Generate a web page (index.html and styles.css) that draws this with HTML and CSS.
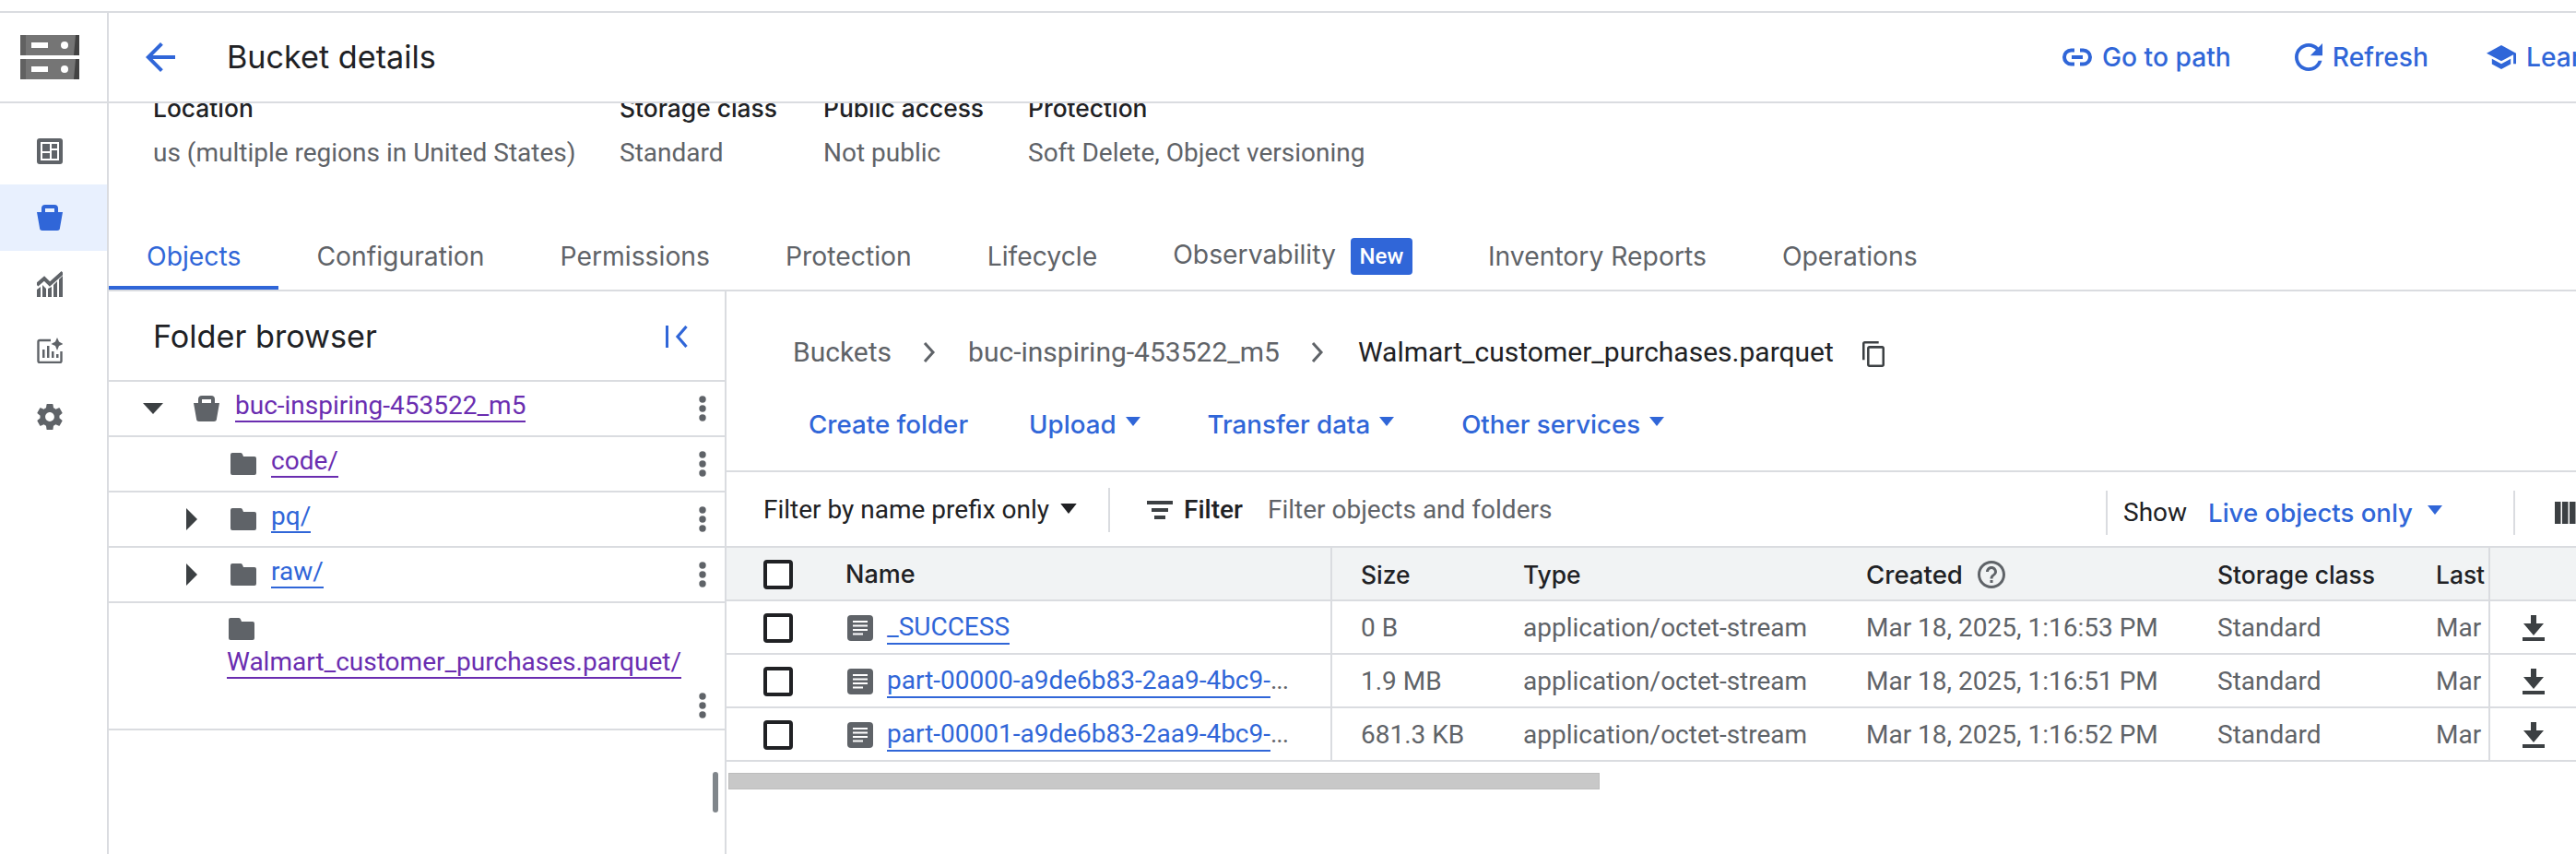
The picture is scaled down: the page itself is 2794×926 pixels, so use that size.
FILE: index.html
```html
<!doctype html>
<html lang="en">
<head>
<meta charset="utf-8">
<title>Bucket details</title>
<link rel="stylesheet" href="styles.css">
</head>
<body>
<svg class="defs" width="0" height="0" aria-hidden="true">
  <symbol id="dots" viewBox="0 0 28 32"><circle cx="14" cy="6" r="3.7"/><circle cx="14" cy="16" r="3.7"/><circle cx="14" cy="26" r="3.7"/></symbol>
  <symbol id="folder" viewBox="0 0 32 32"><path d="M4 4h9a2 2 0 0 1 2 1.5L16 8h12a2 2 0 0 1 2 2v16a2 2 0 0 1-2 2H4a2 2 0 0 1-2-2V6a2 2 0 0 1 2-2z"/></symbol>
  <symbol id="file" viewBox="0 0 32 32"><rect x="2" y="2" width="28" height="28" rx="4"/><path fill="#fff" d="M8 8h16v2H8zM8 12.500h16v2H8zM8 17h16v2H8zM8 21.500h11v2H8z"/></symbol>
  <symbol id="caret-right" viewBox="0 0 12 24"><path d="M0 0l12 12L0 24z"/></symbol>
  <symbol id="mini-caret" viewBox="0 0 16 10"><path d="M0 0h16L8 10z"/></symbol>
  <symbol id="download" viewBox="0 0 24 28"><path d="M9 0h6v9h8L12 22 1 9h8zM0 24h24v4H0z"/></symbol>
  <symbol id="chevron" viewBox="0 0 16 24"><path d="M3 2l9 10-9 10" fill="none" stroke="currentColor" stroke-width="3"/></symbol>
</svg>

<div class="top-rule"></div>
<div class="app">
  <nav class="rail">
    <div class="logo-cell">
      <svg class="logo" width="64" height="48" viewBox="0 0 64 48">
        <path fill="#757575" d="M0 0h64v22H0zM0 26h64v22H0z"/>
        <path fill="#616161" d="M0 0h6v22H0zM0 26h6v22H0z"/>
        <path fill="#424242" d="M58 22l2-22h4v22zM58 48l2-22h4v22z"/>
        <path fill="#fff" d="M12 8h18v6H12zM12 34h18v6H12z"/>
        <circle fill="#fff" cx="48" cy="11" r="4"/><circle fill="#fff" cx="48" cy="37" r="4"/>
      </svg>
    </div>
    <div class="rail-list">
      <div class="rail-item">
        <svg width="28" height="28" viewBox="0 0 28 28"><rect width="28" height="28" rx="3" fill="#5f6368"/><rect x="4" y="4" width="20" height="20" fill="#fff"/><path fill="#5f6368" d="M6 6h8v8H6zM6 16h8v6H6zM16 6h6v5h-6zM16 13h6v9h-6z"/></svg>
      </div>
      <div class="rail-item rail-item-active">
        <svg width="28" height="28" viewBox="0 0 28 28"><path fill="#3066d8" fill-rule="evenodd" d="M9 0h10a4 4 0 0 1 4 4v4h5l-3 17a3 3 0 0 1-3 3H6a3 3 0 0 1-3-3L0 8h5V4a4 4 0 0 1 4-4zm0 4v4h10V4z"/></svg>
      </div>
      <div class="rail-item">
        <svg width="28" height="28" viewBox="0 0 28 28"><path fill="#5f6368" d="M0 20l4-3v11H0zM6 15l4 4v9H6zM12 19l4-2v11h-4zM18 15l4-4v17h-4zM24 9l4-4v23h-4z"/><path d="M0 15l8-7 6 6L28 1.500" fill="none" stroke="#5f6368" stroke-width="4"/></svg>
      </div>
      <div class="rail-item">
        <svg width="28" height="28" viewBox="0 0 28 28"><path d="M15 3H3a1.500 1.500 0 0 0-1.500 1.500v21A1.500 1.500 0 0 0 3 27h22a1.500 1.500 0 0 0 1.500-1.500V15" fill="none" stroke="#5f6368" stroke-width="2.400"/><path fill="#5f6368" d="M6 13h2.500v9H6zM11 9h2.500v13H11zM16 15h2.500v7H16zM21 18h2.500v4H21zM22 0l2 4.500L28.500 7 24 9l-2 5-2-5-4.500-2L20 4.500z"/></svg>
      </div>
      <div class="rail-item">
        <svg width="28" height="28" viewBox="2 2 20 20"><path fill="#5f6368" d="M19.430 12.980c.04-.32.07-.64.07-.98s-.03-.66-.07-.98l2.110-1.650c.19-.15.24-.42.12-.64l-2-3.460c-.12-.22-.39-.3-.61-.22l-2.490 1c-.52-.4-1.080-.73-1.690-.98l-.38-2.650C14.460 2.180 14.250 2 14 2h-4c-.25 0-.46.18-.49.42l-.38 2.650c-.61.25-1.170.59-1.690.98l-2.490-1c-.23-.09-.49 0-.61.22l-2 3.460c-.13.22-.07.49.12.64l2.110 1.650c-.04.32-.07.65-.07.98s.03.66.07.98l-2.110 1.650c-.19.15-.24.42-.12.64l2 3.460c.12.22.39.3.61.22l2.490-1c.52.4 1.080.73 1.690.98l.38 2.650c.03.24.24.42.49.42h4c.25 0 .46-.18.49-.42l.38-2.650c.61-.25 1.170-.59 1.690-.98l2.490 1c.23.09.49 0 .61-.22l2-3.460c.12-.22.07-.49-.12-.64l-2.110-1.650zM12 15.500c-1.930 0-3.500-1.570-3.500-3.500s1.570-3.500 3.500-3.500 3.500 1.570 3.500 3.500-1.570 3.500-3.500 3.500z"/></svg>
      </div>
    </div>
  </nav>

  <main class="main">
    <header class="page-head">
      <svg class="back" width="32" height="32" viewBox="4 4 16 16"><path d="M20 11H7.830l5.590-5.590L12 4l-8 8 8 8 1.410-1.410L7.830 13H20v-2z"/></svg>
      <h1 class="page-title">Bucket details</h1>
      <div class="head-actions">
        <span class="head-action">
          <svg width="32" height="32" viewBox="0 -6.500 32 32"><path d="M13 2H9.500a7.500 7.500 0 0 0 0 15H13M19 2h3.500a7.500 7.500 0 0 1 0 15H19M10 9.500h12" fill="none" stroke="currentColor" stroke-width="4"/></svg>
          Go to path
        </span>
        <span class="head-action head-refresh">
          <svg width="30" height="30" viewBox="4 4 16 16"><path d="M17.650 6.350C16.200 4.900 14.210 4 12 4c-4.420 0-7.990 3.580-7.990 8s3.570 8 7.990 8c3.730 0 6.840-2.550 7.730-6h-2.080c-.82 2.330-3.040 4-5.650 4-3.310 0-6-2.690-6-6s2.690-6 6-6c1.660 0 3.140.69 4.220 1.780L13 11h7V4l-2.350 2.350z"/></svg>
          Refresh
        </span>
        <span class="head-action">
          <svg width="32" height="32" viewBox="1 1 22 22"><path d="M5 13.180v4L12 21l7-3.820v-4L12 17l-7-3.820zM12 3L1 9l11 6 9-4.910V17h2V9L12 3z"/></svg>
          Learn
        </span>
      </div>
    </header>

    <div class="content">
      <section class="summary">
        <div class="sum-label">Location</div>
        <div class="sum-label">Storage class</div>
        <div class="sum-label">Public access</div>
        <div class="sum-label">Protection</div>
        <div class="sum-value">us (multiple regions in United States)</div>
        <div class="sum-value">Standard</div>
        <div class="sum-value">Not public</div>
        <div class="sum-value">Soft Delete, Object versioning</div>
      </section>

      <div class="tabs">
        <span class="tab tab-active">Objects</span>
        <span class="tab">Configuration</span>
        <span class="tab">Permissions</span>
        <span class="tab">Protection</span>
        <span class="tab">Lifecycle</span>
        <span class="tab tab-badged"><span class="tab-raised">Observability</span><span class="badge">New</span></span>
        <span class="tab">Inventory Reports</span>
        <span class="tab">Operations</span>
      </div>

      <div class="split">
        <aside class="browser">
          <div class="browser-head">
            <h2 class="browser-title">Folder browser</h2>
            <svg class="collapse" width="24" height="24" viewBox="0 0 24 24"><path d="M0 0h3v24H0z"/><path d="M22.500 1L13 12l9.500 11" fill="none" stroke="currentColor" stroke-width="3.200"/></svg>
          </div>
          <div class="tree-row tree-root">
            <svg class="caret-down" width="32" height="12" viewBox="0 0 24 12"><path d="M1 0h22L12 12z"/></svg>
            <svg class="tree-bucket" width="32" height="32" viewBox="-2 -2 32 32"><path fill="#5f6368" fill-rule="evenodd" d="M9 0h10a4 4 0 0 1 4 4v4h5l-3 17a3 3 0 0 1-3 3H6a3 3 0 0 1-3-3L0 8h5V4a4 4 0 0 1 4-4zm0 4v4h10V4z"/></svg>
            <a class="tree-link visited">buc-inspiring-453522_m5</a>
            <svg class="dots"><use href="#dots"/></svg>
          </div>
          <div class="tree-row">
            <span class="caret-slot"></span>
            <svg class="tree-folder"><use href="#folder"/></svg>
            <a class="tree-link visited">code/</a>
            <svg class="dots"><use href="#dots"/></svg>
          </div>
          <div class="tree-row">
            <span class="caret-slot"><svg class="caret-right"><use href="#caret-right"/></svg></span>
            <svg class="tree-folder"><use href="#folder"/></svg>
            <a class="tree-link">pq/</a>
            <svg class="dots"><use href="#dots"/></svg>
          </div>
          <div class="tree-row">
            <span class="caret-slot"><svg class="caret-right"><use href="#caret-right"/></svg></span>
            <svg class="tree-folder"><use href="#folder"/></svg>
            <a class="tree-link">raw/</a>
            <svg class="dots"><use href="#dots"/></svg>
          </div>
          <div class="tree-row-wrapped">
            <svg class="tree-folder"><use href="#folder"/></svg>
            <a class="tree-link visited wrapped-link">Walmart_customer_purchases.parquet/</a>
            <svg class="dots wrapped-dots"><use href="#dots"/></svg>
          </div>
          <div class="browser-thumb"></div>
        </aside>

        <section class="objects">
          <div class="crumbs">
            <span class="crumb">Buckets</span>
            <svg class="crumb-sep"><use href="#chevron"/></svg>
            <span class="crumb">buc-inspiring-453522_m5</span>
            <svg class="crumb-sep"><use href="#chevron"/></svg>
            <span class="crumb crumb-current">Walmart_customer_purchases.parquet</span>
            <svg class="copy" width="24" height="28" viewBox="2 1 19 22" preserveAspectRatio="none"><path d="M16 1H4c-1.100 0-2 .9-2 2v14h2V3h12V1zm3 4H8c-1.100 0-2 .9-2 2v14c0 1.100.9 2 2 2h11c1.100 0 2-.9 2-2V7c0-1.100-.9-2-2-2zm0 16H8V7h11v14z"/></svg>
          </div>

          <div class="actions">
            <span class="action">Create folder</span>
            <span class="action action-menu">Upload<svg class="mini-caret"><use href="#mini-caret"/></svg></span>
            <span class="action action-menu">Transfer data<svg class="mini-caret"><use href="#mini-caret"/></svg></span>
            <span class="action action-menu">Other services<svg class="mini-caret"><use href="#mini-caret"/></svg></span>
          </div>

          <div class="filters">
            <span class="filter-mode">Filter by name prefix only<svg class="filter-mode-caret" width="20" height="11" viewBox="0 0 16 10"><use href="#mini-caret"/></svg></span>
            <span class="vrule filter-rule"></span>
            <svg class="filter-icon" width="28" height="20" viewBox="0 0 28 20"><path d="M0 0h28v4H0zM5 8h18v4H5zM8 16h12v4H8z"/></svg>
            <span class="filter-word">Filter</span>
            <span class="filter-placeholder">Filter objects and folders</span>
            <div class="show">
              <span class="vrule"></span>
              <span class="show-label">Show</span>
              <span class="show-value">Live objects only</span>
              <svg class="mini-caret show-caret"><use href="#mini-caret"/></svg>
              <span class="vrule show-rule"></span>
              <svg class="col-icon" width="32" height="24" viewBox="0 0 32 24"><path d="M0 0h6.500v24H0zM8 0h6.500v24H8zM16 0h6.500v24H16zM24 0h6.500v24H24z"/></svg>
            </div>
          </div>

          <table class="grid">
            <colgroup>
              <col class="c-check"><col class="c-name"><col class="c-size"><col class="c-type"><col class="c-created"><col class="c-class"><col class="c-last"><col class="c-dl">
            </colgroup>
            <thead>
              <tr>
                <th class="cell-check"><span class="checkbox"></span></th>
                <th class="cell-name head-name">Name</th>
                <th class="cell-size">Size</th>
                <th>Type</th>
                <th><span class="created-head">Created<svg class="help" width="30" height="30" viewBox="2 2 20 20"><path d="M11 18h2v-2h-2v2zm1-16C6.480 2 2 6.480 2 12s4.480 10 10 10 10-4.480 10-10S17.520 2 12 2zm0 18c-4.410 0-8-3.590-8-8s3.590-8 8-8 8 3.590 8 8-3.590 8-8 8zm0-14c-2.210 0-4 1.790-4 4h2c0-1.100.9-2 2-2s2 .9 2 2c0 2-3 1.750-3 5h2c0-2.250 3-2.500 3-5 0-2.210-1.790-4-4-4z"/></svg></span></th>
                <th>Storage class</th>
                <th class="cell-last">Last</th>
                <th class="cell-dl"></th>
              </tr>
            </thead>
            <tbody>
              <tr>
                <td class="cell-check"><span class="checkbox"></span></td>
                <td class="cell-name"><div class="file"><svg class="file-icon"><use href="#file"/></svg><a class="file-link">_SUCCESS</a></div></td>
                <td class="cell-size">0 B</td>
                <td>application/octet-stream</td>
                <td>Mar 18, 2025, 1:16:53 PM</td>
                <td>Standard</td>
                <td class="cell-last">Mar</td>
                <td class="cell-dl"><svg class="dl"><use href="#download"/></svg></td>
              </tr>
              <tr>
                <td class="cell-check"><span class="checkbox"></span></td>
                <td class="cell-name"><div class="file"><svg class="file-icon"><use href="#file"/></svg><a class="file-link">part-00000-a9de6b83-2aa9-4bc9-</a><span class="more">...</span></div></td>
                <td class="cell-size">1.9 MB</td>
                <td>application/octet-stream</td>
                <td>Mar 18, 2025, 1:16:51 PM</td>
                <td>Standard</td>
                <td class="cell-last">Mar</td>
                <td class="cell-dl"><svg class="dl"><use href="#download"/></svg></td>
              </tr>
              <tr>
                <td class="cell-check"><span class="checkbox"></span></td>
                <td class="cell-name"><div class="file"><svg class="file-icon"><use href="#file"/></svg><a class="file-link">part-00001-a9de6b83-2aa9-4bc9-</a><span class="more">...</span></div></td>
                <td class="cell-size">681.3 KB</td>
                <td>application/octet-stream</td>
                <td>Mar 18, 2025, 1:16:52 PM</td>
                <td>Standard</td>
                <td class="cell-last">Mar</td>
                <td class="cell-dl"><svg class="dl"><use href="#download"/></svg></td>
              </tr>
            </tbody>
          </table>
          <div class="hscroll"></div>
        </section>
      </div>
    </div>
  </main>
</div>
</body>
</html>
```
FILE: styles.css
```css
:root {
  --line: #dadce0;
  --ink: #202124;
  --muted: #5f6368;
  --blue: #3066d8;
  --purple: #6a2db0;
  --dark-icon: #3c4043;
  --display: "Inter", "Open Sans", sans-serif;
  --body: "Roboto", "Liberation Sans", sans-serif;
}

* { box-sizing: border-box; }

html, body {
  margin: 0;
  width: 2794px;
  height: 926px;
  overflow: hidden;
  background: #fff;
  color: var(--ink);
  font: 28px/40px var(--body);
}

.defs { position: absolute; }
svg { display: block; flex: none; fill: currentColor; }
h1, h2 { margin: 0; font-weight: 400; }

.top-rule { height: 14px; border-bottom: 2px solid var(--line); }
.app { display: flex; height: 912px; }

/* Rail */
.rail { width: 118px; flex: none; border-right: 2px solid var(--line); }
.logo-cell {
  height: 98px;
  padding: 24px 0 0 22px;
  border-bottom: 2px solid var(--line);
}
.rail-list { padding-top: 16px; }
.rail-item { height: 72px; display: flex; align-items: center; padding-left: 40px; }
.rail-item-active { background: #e8f0fe; }

/* Main */
.main { flex: 1; min-width: 0; display: flex; flex-direction: column; }
.page-head {
  height: 98px;
  flex: none;
  display: flex;
  align-items: center;
  padding-left: 40px;
  border-bottom: 2px solid var(--line);
  position: relative;
  z-index: 1;
  background: #fff;
}
.back { color: var(--blue); }
.page-title {
  flex: 1;
  margin-left: 56px;
  font: 34.200px/44px var(--display);
  color: var(--ink);
}
.head-actions { display: flex; align-items: center; width: 557px; flex: none; overflow: hidden; white-space: nowrap; }
.head-action {
  display: flex;
  align-items: center;
  gap: 11px;
  margin-right: 66px;
  font: 500 28.200px/40px var(--display);
  color: var(--blue);
}
.head-refresh { margin-left: 3px; margin-right: 63px; }

.content { flex: 1; min-height: 0; overflow: hidden; }

/* Summary */
.summary {
  display: grid;
  grid-template-columns: 457px 172px 173px auto;
  column-gap: 49px;
  row-gap: 9px;
  padding-left: 48px;
  margin-top: -15px;
  white-space: nowrap;
}
.sum-label { font: 500 26.400px/40px var(--display); color: var(--ink); }
.sum-value { color: var(--muted); }

/* Tabs */
.tabs {
  display: flex;
  margin-top: 54px;
  height: 76px;
  border-bottom: 2px solid var(--line);
  font: 28.300px/40px var(--display);
  color: var(--muted);
  white-space: nowrap;
}
.tab { display: flex; align-items: center; padding: 1px 41px 0; height: 74px; }
.tab-active { color: var(--blue); box-shadow: inset 0 -4px 0 var(--blue); }
.tab-badged { gap: 16px; }
.tab-raised { margin-top: -4px; }
.badge {
  display: block;
  height: 40px;
  width: 67px;
  border-radius: 4px;
  background: var(--blue);
  color: #fff;
  font: 500 24px/40px var(--body);
  text-align: center;
}

/* Split */
.split { display: flex; height: 610px; }

/* Folder browser */
.browser { position: relative; width: 670px; flex: none; border-right: 2px solid var(--line); }
.browser-head {
  height: 98px;
  display: flex;
  align-items: center;
  justify-content: space-between;
  padding: 2px 40px 0 48px;
  border-bottom: 2px solid var(--line);
}
.browser-title { font: 34.200px/44px var(--display); color: var(--ink); }
.collapse { color: var(--blue); }
.tree-row {
  height: 60px;
  display: flex;
  align-items: center;
  padding: 0 10px 0 74px;
  border-bottom: 2px solid var(--line);
}
.tree-root { padding-left: 32px; }
.caret-down { margin-right: 26px; color: var(--dark-icon); }
.tree-bucket { margin-right: 15px; }
.caret-slot { width: 32px; height: 24px; margin-right: 24px; display: flex; justify-content: center; color: var(--dark-icon); }
.caret-right { width: 12px; height: 24px; }
.tree-folder { width: 32px; height: 32px; margin-right: 14px; color: var(--muted); }
.tree-link {
  display: block;
  line-height: 32px;
  margin-bottom: 4px;
  border-bottom: 2px solid currentColor;
  color: var(--blue);
  white-space: nowrap;
}
.visited { color: var(--purple); }
.dots { width: 28px; height: 32px; margin-left: auto; color: var(--muted); }
.tree-row-wrapped {
  height: 138px;
  padding: 12px 10px 0 128px;
  border-bottom: 2px solid var(--line);
}
.wrapped-link { width: fit-content; margin: 4px 0 0; }
.wrapped-dots { margin-top: 13px; }
.browser-thumb {
  position: absolute;
  top: 521px;
  right: 7px;
  width: 6px;
  height: 44px;
  border-radius: 3px;
  background: #80868b;
}

/* Objects */
.objects { flex: 1; min-width: 0; overflow: hidden; }
.crumbs {
  display: flex;
  align-items: center;
  height: 48px;
  margin-top: 42px;
  padding-left: 72px;
  font-size: 30px;
  color: var(--muted);
  white-space: nowrap;
}
.crumb-sep { width: 16px; height: 24px; margin: 0 34px 0 33px; }
.crumb-current { color: var(--ink); margin-left: 2px; }
.copy { margin: 4px 0 0 31px; color: var(--dark-icon); }

.actions {
  display: flex;
  align-items: center;
  gap: 66px;
  height: 74px;
  padding: 0 0 26px 89px;
  margin-top: 30px;
  font: 500 27.700px/48px var(--display);
  color: var(--blue);
  white-space: nowrap;
}
.action-menu { display: flex; align-items: center; padding-right: 7px; }
.mini-caret { width: 16px; height: 10px; margin: -6px 0 0 10px; }

.filters {
  display: flex;
  align-items: center;
  height: 82px;
  padding: 2px 0 0 40px;
  border-top: 2px solid var(--line);
  white-space: nowrap;
}
.filter-mode { display: flex; align-items: center; }
.filter-mode-caret { margin: -4px 0 0 11px; color: var(--ink); }
.vrule { display: block; width: 2px; height: 48px; flex: none; background: var(--line); }
.filter-rule { margin-left: 33px; }
.filter-icon { margin-left: 40px; color: var(--dark-icon); }
.filter-word { margin-left: 12px; font-weight: 500; }
.filter-placeholder { flex: 1; margin-left: 27px; color: var(--muted); }
.show { display: flex; align-items: center; width: 510px; flex: none; height: 48px; margin-top: 6px; }
.show-label { margin-left: 17px; }
.show-value { margin-left: 23px; font: 500 27.600px/40px var(--display); color: var(--blue); }
.mini-caret.show-caret { margin: -6px 0 0 16px; color: var(--blue); }
.show-rule { margin-left: 77px; }
.col-icon { margin-left: 43px; color: var(--dark-icon); }

.grid {
  table-layout: fixed;
  width: 2006px;
  border-collapse: separate;
  border-spacing: 0;
  white-space: nowrap;
}
.c-check { width: 129px; }
.c-name { width: 528px; }
.c-size { width: 207px; }
.c-type { width: 372px; }
.c-created { width: 381px; }
.c-class { width: 237px; }
.c-last { width: 59px; }
.c-dl { width: 93px; }
.grid th, .grid td {
  height: 58px;
  padding: 0;
  text-align: left;
  vertical-align: middle;
  border-bottom: 2px solid var(--line);
  overflow: hidden;
}
.grid th {
  height: 60px;
  padding-top: 2px;
  border-top: 2px solid var(--line);
  background: #f1f3f4;
  font: 500 26.400px/40px var(--display);
  color: var(--ink);
}
.grid td { padding-top: 1px; color: var(--muted); }
.grid .cell-check { padding-left: 40px; }
.cell-name { border-right: 2px solid var(--line); }
.grid .cell-size { padding-left: 31px; }
.cell-last { border-right: 2px solid var(--line); }
.grid .cell-dl { padding-left: 35px; }
.grid .head-name { font-size: 27px; }
.checkbox {
  display: block;
  width: 32px;
  height: 32px;
  border: 4px solid var(--ink);
  border-radius: 4px;
  background: #fff;
}
.created-head { display: flex; align-items: center; gap: 16px; font-size: 27.600px; }
.help { color: var(--muted); }
.file { display: flex; align-items: center; }
.file-icon { width: 32px; height: 32px; margin-right: 13px; color: var(--muted); }
.file-link {
  display: block;
  line-height: 34px;
  border-bottom: 2px solid currentColor;
  color: var(--blue);
}
.more { color: var(--muted); margin-top: -2px; letter-spacing: -1px; }
.dl { width: 24px; height: 28px; color: var(--dark-icon); }

.hscroll {
  width: 945px;
  height: 18px;
  margin: 12px 0 0 2px;
  background: #c8c8c8;
  border: 1px solid #bdbdbd;
}
```
